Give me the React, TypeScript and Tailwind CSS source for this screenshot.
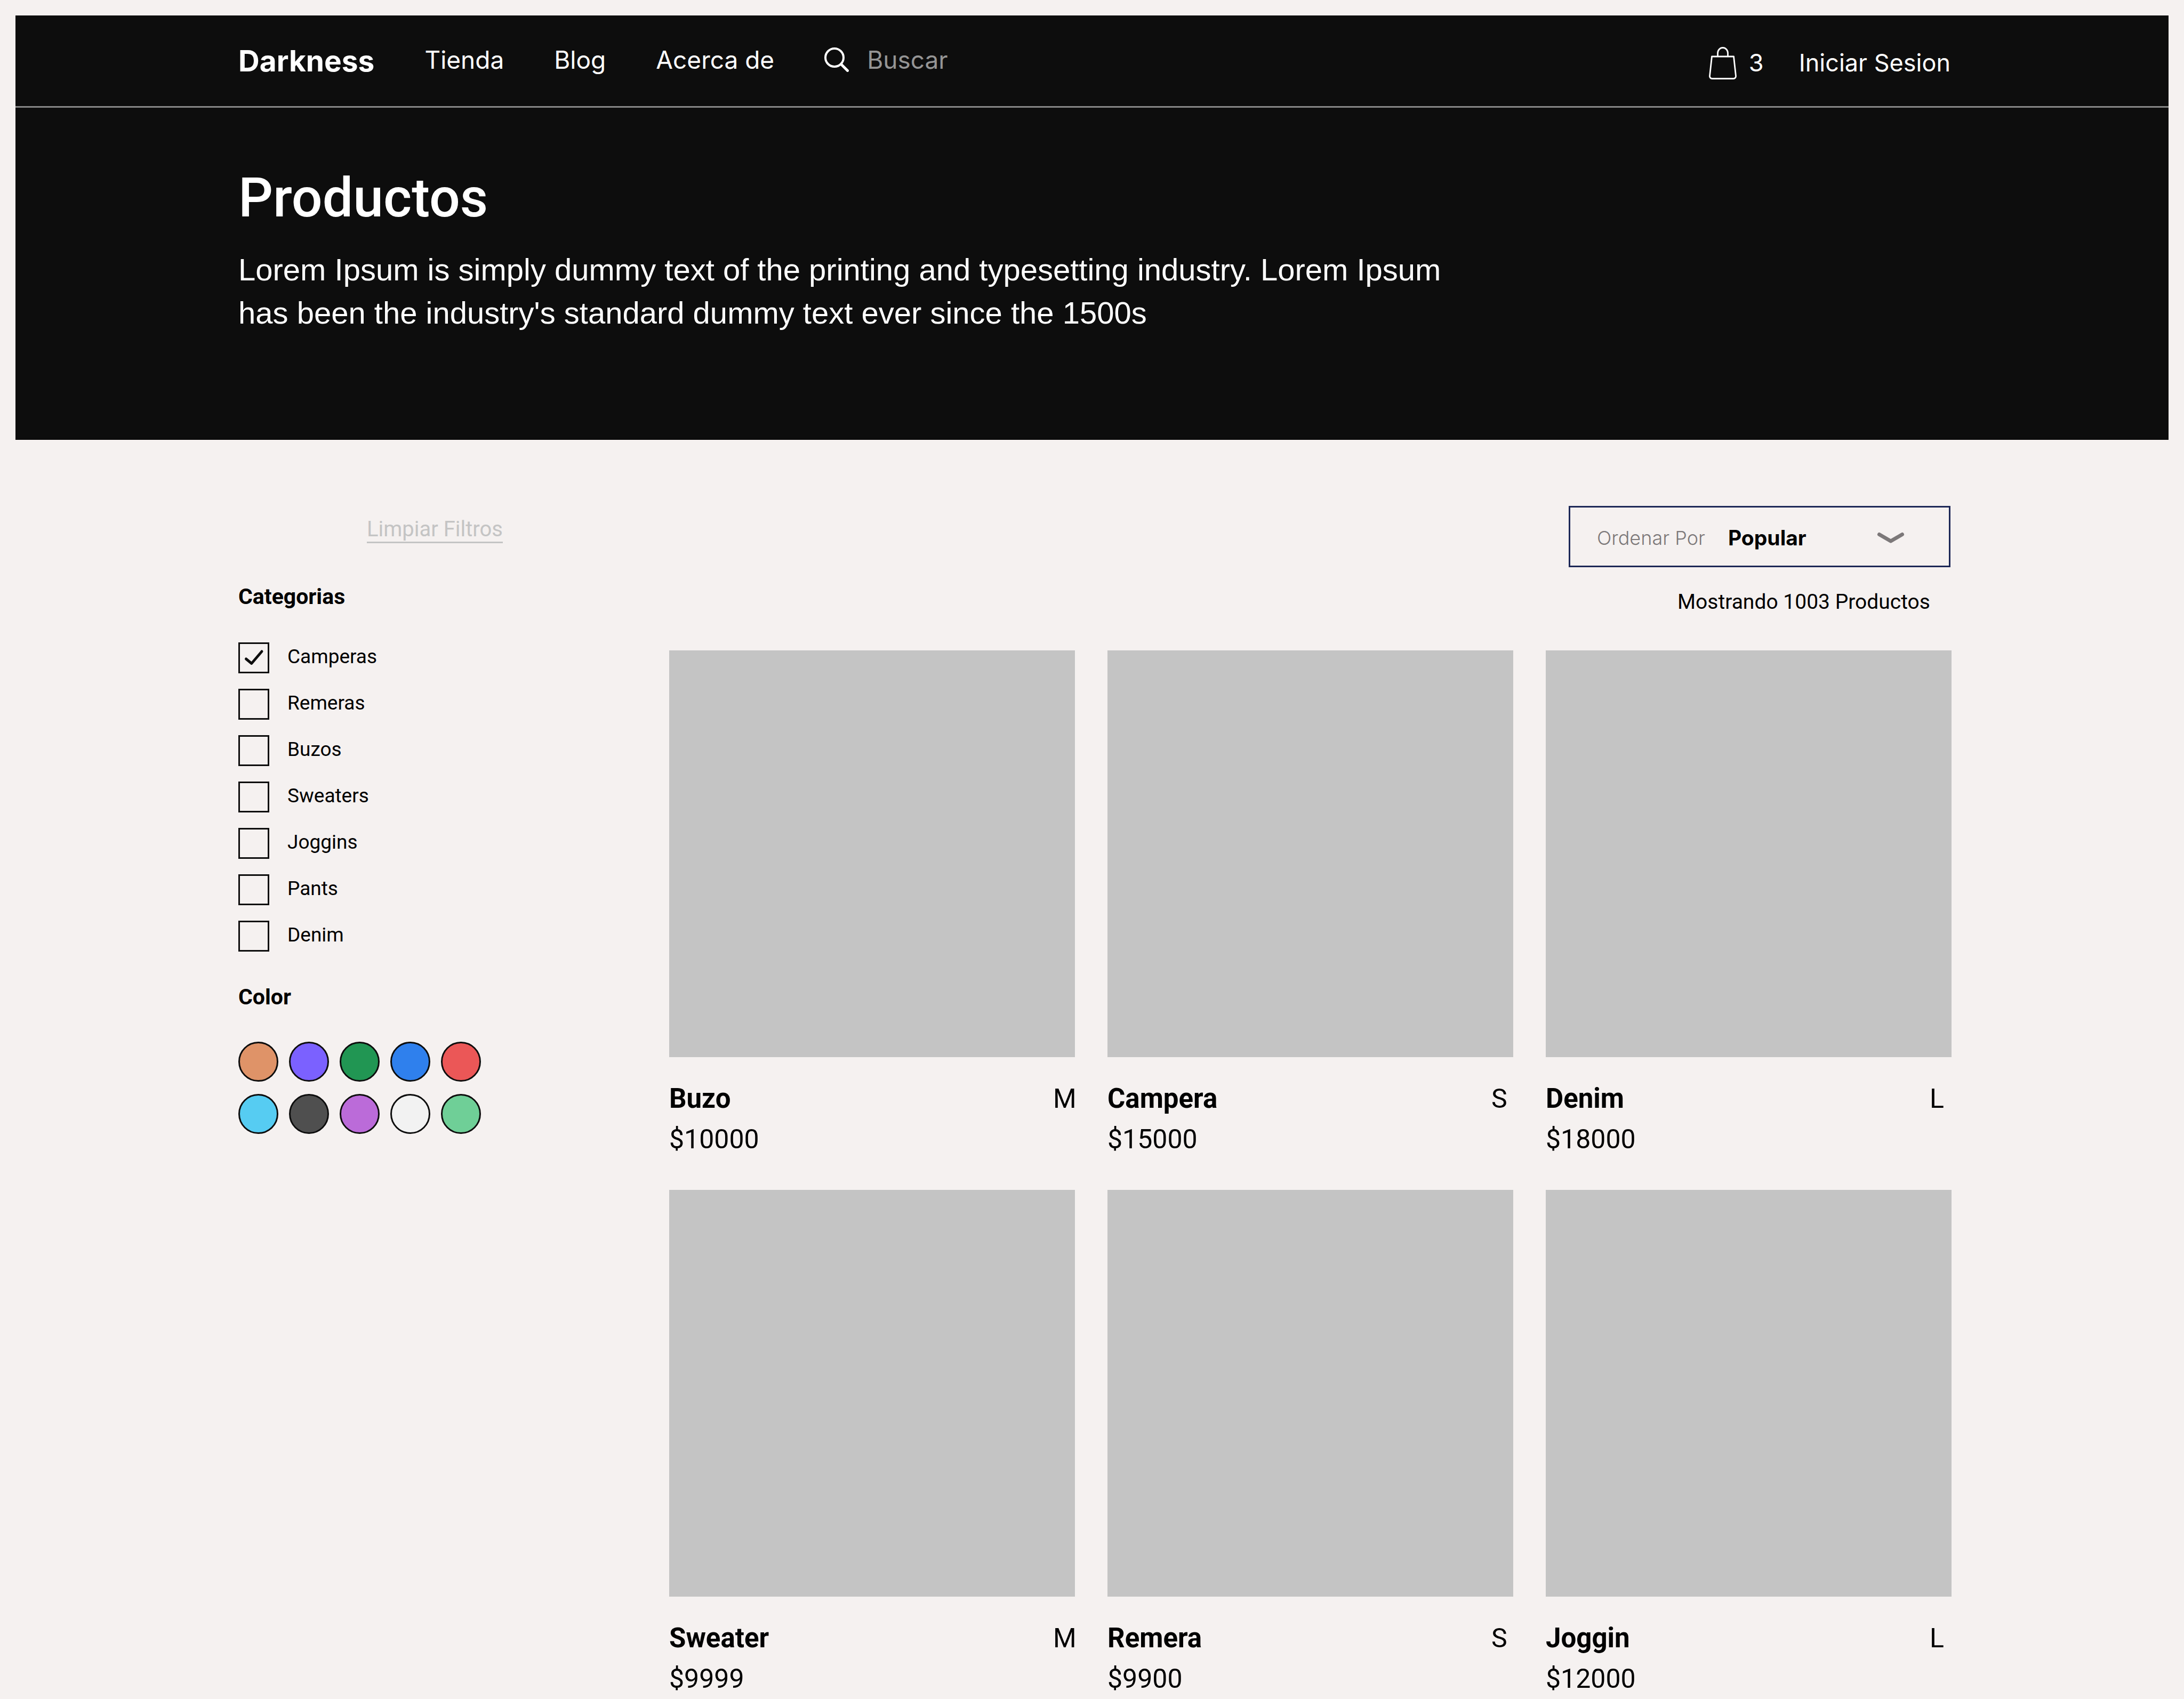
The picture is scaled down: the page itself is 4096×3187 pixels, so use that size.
const navLinks = ["Tienda", "Blog", "Acerca de"];

const categories = ["Camperas", "Remeras", "Buzos", "Sweaters", "Joggins", "Pants", "Denim"];

const colors = [
  { name: "Naranja", className: "bg-[#df9368]" },
  { name: "Violeta", className: "bg-[#7b61ff]" },
  { name: "Verde", className: "bg-[#219653]" },
  { name: "Azul", className: "bg-[#2f80ed]" },
  { name: "Rojo", className: "bg-[#eb5757]" },
  { name: "Celeste", className: "bg-[#56ccf2]" },
  { name: "Gris", className: "bg-[#4f4f4f]" },
  { name: "Lila", className: "bg-[#bb6bd9]" },
  { name: "Blanco", className: "bg-[#f2f2f2]" },
  { name: "Menta", className: "bg-[#6fcf97]" },
];

const products = [
  { name: "Buzo", size: "M", price: 10000 },
  { name: "Campera", size: "S", price: 15000 },
  { name: "Denim", size: "L", price: 18000 },
  { name: "Sweater", size: "M", price: 9999 },
  { name: "Remera", size: "S", price: 9900 },
  { name: "Joggin", size: "L", price: 12000 },
];

function SearchIcon() {
  return (
    <svg aria-hidden="true" viewBox="0 0 46 46" className="size-[46px] shrink-0" fill="none" stroke="currentColor">
      <circle cx="19" cy="19" r="17" strokeWidth="4" />
      <path d="M31.5 31.5 43.5 43.5" strokeWidth="5" strokeLinecap="round" />
    </svg>
  );
}

function BagIcon() {
  return (
    <svg aria-hidden="true" viewBox="0 0 52 61" className="h-[61px] w-[52px] shrink-0" fill="none" stroke="currentColor" strokeWidth="2.8" strokeLinejoin="round">
      <path d="M5.5 18h41l4 36.500a4.500 4.500 0 0 1-4.500 5H6a4.500 4.500 0 0 1-4.500-5Z" />
      <path d="M16.500 18V11.500a9.500 10 0 0 1 19 0V18" />
    </svg>
  );
}

function Header() {
  return (
    <header className="mx-[29px] mt-[29px] border-b border-black bg-[#0d0d0d] text-white">
      <div className="flex h-[173px] items-center justify-between border-b-[3px] border-[#868686] pr-[409px] pl-[418px] font-['Inter',sans-serif] leading-[60px]">
        <nav className="flex items-center gap-[94px] text-[46px]">
          <a href="#" className="text-[55px] font-bold">
            Darkness
          </a>
          {navLinks.map((link) => (
            <a key={link} href="#" className="pb-1">
              {link}
            </a>
          ))}
          <label className="flex items-center gap-[34px] pb-1">
            <SearchIcon />
            <input
              type="search"
              aria-label="Buscar"
              placeholder="Buscar"
              className="w-[400px] appearance-none bg-transparent p-0 outline-none placeholder:text-[#959595] placeholder:opacity-100"
            />
          </label>
        </nav>
        <div className="flex items-center gap-[66px] pt-2 text-[45px]">
          <a href="#" aria-label="Carrito, 3 productos" className="flex items-center gap-[23px]">
            <BagIcon />3
          </a>
          <a href="#">Iniciar Sesion</a>
        </div>
      </div>
      <div className="pt-[109px] pr-[409px] pb-[197px] pl-[418px]">
        <h1 className="text-[102px] leading-[120px] font-medium">Productos</h1>
        <p className="mt-[34px] max-w-[2340px] font-['Liberation_Sans',sans-serif] text-[58px] leading-[81px]">
          Lorem Ipsum is simply dummy text of the printing and typesetting industry. Lorem Ipsum has been the
          industry&#39;s standard dummy text ever since the 1500s
        </p>
      </div>
    </header>
  );
}

function CategoryOption({ name, checked }: { name: string; checked: boolean }) {
  return (
    <label className="flex items-center gap-[34px]">
      <span className="relative size-[58px]">
        <input
          type="checkbox"
          defaultChecked={checked}
          className="peer block size-full appearance-none border-[3px] border-[#0d0d0d]"
        />
        <svg
          aria-hidden="true"
          viewBox="0 0 58 58"
          className="pointer-events-none invisible absolute inset-0 peer-checked:visible"
          fill="none"
          stroke="#0d0d0d"
          strokeWidth="5"
          strokeLinecap="round"
          strokeLinejoin="round"
        >
          <path d="M14.500 31 24.800 39.500 44 17" />
        </svg>
      </span>
      <span className="pb-1 text-[37px] leading-12">{name}</span>
    </label>
  );
}

function Filters() {
  return (
    <aside className="mt-[21px] w-[496px] shrink-0">
      <div className="flex justify-end">
        <button type="button" className="border-b-[3px] border-[#c4c4c4] text-[40px] leading-[46px] text-[#c4c4c4]">
          Limpiar Filtros
        </button>
      </div>
      <h2 className="mt-[76px] text-[41px] leading-12 font-bold">Categorias</h2>
      <div className="mt-[62px] flex flex-col gap-[29px]">
        {categories.map((name, i) => (
          <CategoryOption key={name} name={name} checked={i === 0} />
        ))}
      </div>
      <h2 className="mt-[61px] text-[41px] leading-12 font-bold">Color</h2>
      <div className="mt-[60px] grid w-max grid-cols-5 gap-x-5 gap-y-[23px]">
        {colors.map((color) => (
          <label key={color.name} className="block size-[75px]">
            <input
              type="checkbox"
              aria-label={color.name}
              className={`block size-full appearance-none rounded-full border-[3px] border-[#0d0d0d] ${color.className}`}
            />
          </label>
        ))}
      </div>
    </aside>
  );
}

function SortBox() {
  return (
    <div className="relative mr-0.5 flex h-[115px] w-[716px] items-center gap-[43px] border-[3px] border-[#1d2857] pt-1 pl-[50px] font-['Inter',sans-serif]">
      <label htmlFor="sort" className="text-[36px] leading-12 font-light text-[#7c7879]">
        Ordenar Por
      </label>
      <select
        id="sort"
        defaultValue="Popular"
        className="flex-1 appearance-none bg-transparent text-[39px] leading-12 font-bold outline-none"
      >
        <option>Popular</option>
        <option>Precio</option>
        <option>Nuevo</option>
      </select>
      <svg
        aria-hidden="true"
        viewBox="0 0 52 22"
        className="pointer-events-none absolute right-[83px] h-[22px] w-[52px]"
        fill="none"
        stroke="#7c7879"
        strokeWidth="7"
        strokeLinecap="round"
        strokeLinejoin="round"
      >
        <path d="M4.500 4.500 26 17 47.500 4.500" />
      </svg>
    </div>
  );
}

function ProductCard({ name, size, price }: { name: string; size: string; price: number }) {
  return (
    <article>
      <div className="aspect-[761/763] bg-[#c4c4c4]" />
      <div className="mt-12 flex justify-between leading-[60px]">
        <h3 className="text-[51px] font-bold">{name}</h3>
        <span className="w-[41px] text-[50px]">{size}</span>
      </div>
      <p className="mt-4 text-[50px] leading-[60px]">${price}</p>
    </article>
  );
}

export default function App() {
  return (
    <div className="flow-root min-h-screen bg-[#f5f1f0] font-['Roboto',sans-serif] text-black">
      <Header />
      <main className="flex gap-[312px] pt-[124px] pr-[436px] pl-[447px]">
        <Filters />
        <section className="min-w-0 flex-1">
          <div className="flex flex-col items-end">
            <SortBox />
            <p className="mt-[41px] pr-10 text-[39px] leading-12">Mostrando 1003 Productos</p>
          </div>
          <div className="mt-[67px] grid grid-cols-3 gap-x-[61px] gap-y-[65px]">
            {products.map((product) => (
              <ProductCard key={product.name} {...product} />
            ))}
          </div>
        </section>
      </main>
    </div>
  );
}
